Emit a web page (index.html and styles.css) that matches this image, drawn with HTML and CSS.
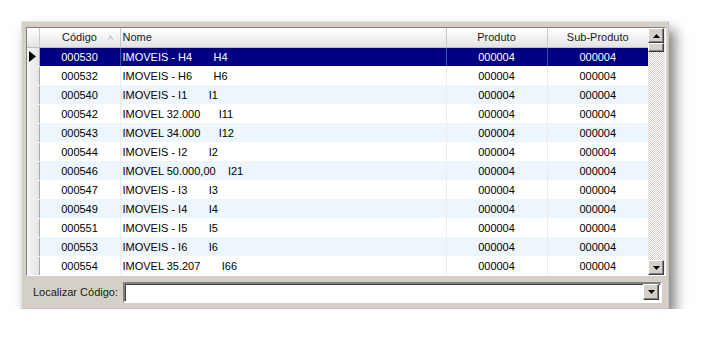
FILE: index.html
```html
<!DOCTYPE html>
<html lang="pt">
  <head>
    <meta charset="UTF-8" />
    <title>Localizar Código</title>
    <link rel="stylesheet" href="styles.css">
  </head>
  <body>
    <div class="panel">
      <div class="grid">
        <div class="table-wrap">
          <table>
            <thead>
              <tr>
                <th class="ind"></th>
                <th class="cod">Código<svg class="sort" width="5" height="5" viewBox="0 0 5 5"><path d="M0.5 4.5 L2.5 0.5 M2.5 0.5 L4.5 4.5" stroke="#b8b8b8" fill="none"/></svg></th>
                <th class="nome">Nome</th>
                <th class="prod">Produto</th>
                <th class="sub">Sub-Produto</th>
              </tr>
            </thead>
            <tbody>
              <tr class="sel"><td class="ind"><svg width="7" height="11" viewBox="0 0 7 11"><path d="M0 0 L7 5.5 L0 11 Z" fill="#000"/></svg></td><td>000530</td><td class="nome">IMOVEIS - H4       H4</td><td>000004</td><td>000004</td></tr>
              <tr><td class="ind"></td><td>000532</td><td class="nome">IMOVEIS - H6       H6</td><td>000004</td><td>000004</td></tr>
              <tr class="alt"><td class="ind"></td><td>000540</td><td class="nome">IMOVEIS - I1       I1</td><td>000004</td><td>000004</td></tr>
              <tr><td class="ind"></td><td>000542</td><td class="nome">IMOVEL 32.000      I11</td><td>000004</td><td>000004</td></tr>
              <tr class="alt"><td class="ind"></td><td>000543</td><td class="nome">IMOVEL 34.000      I12</td><td>000004</td><td>000004</td></tr>
              <tr><td class="ind"></td><td>000544</td><td class="nome">IMOVEIS - I2       I2</td><td>000004</td><td>000004</td></tr>
              <tr class="alt"><td class="ind"></td><td>000546</td><td class="nome">IMOVEL 50.000,00    I21</td><td>000004</td><td>000004</td></tr>
              <tr><td class="ind"></td><td>000547</td><td class="nome">IMOVEIS - I3       I3</td><td>000004</td><td>000004</td></tr>
              <tr class="alt"><td class="ind"></td><td>000549</td><td class="nome">IMOVEIS - I4       I4</td><td>000004</td><td>000004</td></tr>
              <tr><td class="ind"></td><td>000551</td><td class="nome">IMOVEIS - I5       I5</td><td>000004</td><td>000004</td></tr>
              <tr class="alt"><td class="ind"></td><td>000553</td><td class="nome">IMOVEIS - I6       I6</td><td>000004</td><td>000004</td></tr>
              <tr><td class="ind"></td><td>000554</td><td class="nome">IMOVEL 35.207       I66</td><td>000004</td><td>000004</td></tr>
            </tbody>
          </table>
        </div>
        <div class="scrollbar">
          <div class="btn"><svg width="7" height="4" viewBox="0 0 7 4"><path d="M3.5 0 L7 4 L0 4 Z" fill="#000"/></svg></div>
          <div class="thumb"></div>
          <div class="track"></div>
          <div class="btn"><svg width="7" height="4" viewBox="0 0 7 4"><path d="M0 0 L7 0 L3.5 4 Z" fill="#000"/></svg></div>
        </div>
      </div>
      <div class="search">
        <label>Localizar Código:</label>
        <div class="combo">
          <input type="text" spellcheck="false" />
          <div class="btn"><svg width="7" height="4" viewBox="0 0 7 4"><path d="M0 0 L7 0 L3.5 4 Z" fill="#000"/></svg></div>
        </div>
      </div>
    </div>
  </body>
</html>
```

FILE: styles.css
```css
*{
    margin: 0px;
    padding: 0px;
    box-sizing: border-box;
}
body{
    background: #fff;
    font-family: "Liberation Sans", Arial, sans-serif;
    font-size: 11px;
    color: #000;
}
.panel{
    width: 648px;
    height: 288px;
    margin: 21px 0 0 21px;
    background: #d4d0c8;
    border: 1px solid #c8c4bc;
    border-top-color: #e4e2dc;
    border-left-color: #e4e2dc;
    box-shadow: 6px 9px 12px rgba(0, 0, 0, 0.5);
    padding: 5px 2px 0 4px;
}
.grid{
    display: flex;
    height: 249px;
    border-top: 1px solid #808080;
    border-left: 1px solid #808080;
    border-right: 1px solid #fff;
    border-bottom: 1px solid #fff;
    background: #fff;
}
.table-wrap{
    width: 621px;
    overflow: hidden;
}
table{
    border-collapse: collapse;
    table-layout: fixed;
    width: 621px;
}
th, td{
    height: 19px;
    padding: 0 2px;
    white-space: pre;
    overflow: hidden;
    text-align: center;
    font-weight: normal;
}
th{
    height: 19px;
    background: linear-gradient(#ffffff, #f4f4f4 45%, #e2e2e2);
    border-right: 1px solid #c8c8c8;
    border-bottom: 1px solid #c0c0c0;
    color: #1a1a1a;
}
th.ind, td.ind{ width: 12px; padding: 0; }
th.cod{ width: 81px; position: relative; }
th.nome, td.nome{ width: 326px; text-align: left; padding-left: 2px; }
th.prod{ width: 101px; }
th.sub{ width: 101px; border-right: 0; }
.sort{
    position: absolute;
    right: 7px;
    top: 7px;
}
td{
    border-right: 1px solid #ececec;
    background: #fff;
}
td:last-child{ border-right: 0; }
tr.alt td{ background: #edf5fd; }
td.ind, tr.alt td.ind{
    background: linear-gradient(90deg, #f6f6f6, #e4e4e4);
    border-right: 1px solid #a8a8a8;
    border-bottom: 1px solid #f0f0f0;
}
td.ind svg{
    display: block;
    margin: 0 0 0 2px;
}
tr.sel td{
    background: #000080;
    color: #fff;
    border-right-color: #3a4fb0;
}
tr.sel td.ind{
    background: linear-gradient(90deg, #f6f6f6, #e4e4e4);
    border-right-color: #a8a8a8;
}
.scrollbar{
    width: 17px;
    display: flex;
    flex-direction: column;
    background-color: #eeede9;
    background-image: repeating-conic-gradient(#d4d0c8 0 25%, #fff 0 50%);
    background-size: 2px 2px;
}
.btn{
    width: 16px;
    height: 15px;
    background: #d4d0c8;
    border: 1px solid;
    border-color: #fff #404040 #404040 #fff;
    box-shadow: inset -1px -1px 0 #808080;
    display: flex;
    align-items: center;
    justify-content: center;
}
.thumb{
    width: 16px;
    height: 9px;
    background: #d4d0c8;
    border: 1px solid;
    border-color: #fff #404040 #404040 #fff;
    box-shadow: inset -1px -1px 0 #808080;
}
.track{
    flex: 1;
}
.search{
    display: flex;
    align-items: center;
    height: 32px;
    padding: 0 4px 0 7px;
}
.search label{
    width: 90px;
    color: #1a1a1a;
}
.combo{
    flex: 1;
    display: flex;
    align-items: center;
    height: 21px;
    background: #fff;
    border: 2px solid;
    border-color: #808080 #fff #fff #808080;
    box-shadow: inset 1px 1px 0 #404040;
    padding-right: 1px;
}
.combo input{
    flex: 1;
    border: 0;
    outline: 0;
    height: 15px;
    background: transparent;
}
.combo .btn{
    height: 16px;
}
```
